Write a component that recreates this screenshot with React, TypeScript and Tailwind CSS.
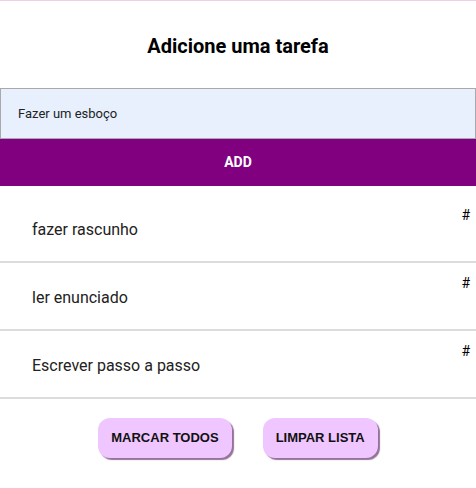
import React from "react";

const items = ["fazer rascunho", "ler enunciado", "Escrever passo a passo"];

export default function App() {
  return (
    <div className="w-[476px] h-[488px] bg-white border-t border-[#f0cfe6]" style={{ fontFamily: "Roboto, 'Liberation Sans', sans-serif" }}>
      <div className="h-[87px] flex items-center justify-center">
        <h1 className="text-[20px] font-bold text-black mt-[2px]">Adicione uma tarefa</h1>
      </div>
      <div className="h-[51px] bg-[#e8f0fe] border border-[#a9a9a9] flex items-center pl-[17px] text-[13px] text-[#222]">
        Fazer um esboço
      </div>
      <div className="h-[47px] bg-[#800080] flex items-center justify-center text-white font-bold text-[14px]">
        ADD
      </div>
      <ul className="mt-[9px]">
        {items.map((t) => (
          <li key={t} className="relative h-[68px] border-b-2 border-[#dcdcdc] flex items-center pl-[32px] pt-[3px] text-[16px] text-[#222]">
            {t}
            <span className="absolute right-[6px] top-[10px] text-[14px] text-black">#</span>
          </li>
        ))}
      </ul>
      <div className="flex justify-center gap-[31px] mt-[19px]" style={{ fontFamily: "'Liberation Sans', Arial, sans-serif" }}>
        <button className="h-[40px] px-[13px] rounded-[12px] bg-[#efc6ff] text-[13px] font-bold text-[#111] shadow-[2px_2px_1px_#957399]">MARCAR TODOS</button>
        <button className="h-[40px] px-[13px] rounded-[12px] bg-[#efc6ff] text-[13px] font-bold text-[#111] shadow-[2px_2px_1px_#957399]">LIMPAR LISTA</button>
      </div>
    </div>
  );
}
